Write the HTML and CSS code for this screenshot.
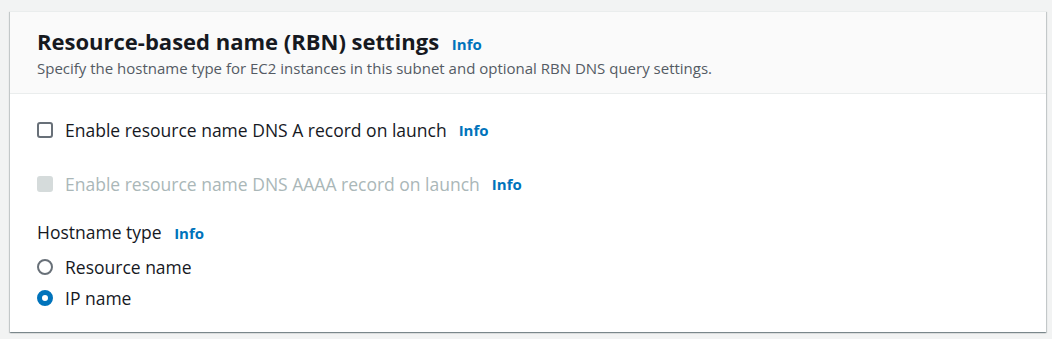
FILE: index.html
```html
<!DOCTYPE html>
<html lang="en">
<head>
    <meta charset="UTF-8">
    <title>Resource-based name (RBN) settings</title>
    <link rel="stylesheet" href="styles.css">
</head>
<body>
    <div class="panel">
        <div class="panel-header">
            <h2 class="panel-title">Resource-based name (RBN) settings <a class="info" href="#">Info</a></h2>
            <p class="panel-desc">Specify the hostname type for EC2 instances in this subnet and optional RBN DNS query settings.</p>
        </div>
        <div class="panel-body">
            <label class="check-row">
                <span class="checkbox"></span>
                <span class="check-label">Enable resource name DNS A record on launch</span>
                <a class="info" href="#">Info</a>
            </label>
            <label class="check-row disabled">
                <span class="checkbox"></span>
                <span class="check-label">Enable resource name DNS AAAA record on launch</span>
                <a class="info" href="#">Info</a>
            </label>
            <div class="field">
                <div class="field-label">Hostname type <a class="info" href="#">Info</a></div>
                <div class="radio-group">
                    <label class="radio-row">
                        <span class="radio"></span>
                        <span>Resource name</span>
                    </label>
                    <label class="radio-row">
                        <span class="radio checked"></span>
                        <span>IP name</span>
                    </label>
                </div>
            </div>
        </div>
    </div>
</body>
</html>
```

FILE: styles.css
```css
* {
    box-sizing: border-box;
}
body {
    margin: 0;
    padding: 11px 6px 6px 10px;
    background-color: #f2f3f3;
    font-family: "Open Sans", "Noto Sans", sans-serif;
    color: #16191f;
}
.panel {
    background-color: white;
    border-top: 1px solid #eaeded;
    box-shadow: 0 1px 1px 0 rgba(0,28,36,0.3), 1px 1px 1px 0 rgba(0,28,36,0.15), -1px 1px 1px 0 rgba(0,28,36,0.15);
}
.panel-header {
    background-color: #fafafa;
    border-bottom: 1px solid #eaeded;
    padding: 15px 26px 15px 27px;
}
.panel-title {
    margin: 0;
    font-size: 22px;
    font-weight: 700;
    line-height: 28px;
}
.info {
    font-size: 15px;
    font-weight: 700;
    color: #0073bb;
    text-decoration: none;
}
.panel-title .info {
    margin-left: 7px;
}
.panel-desc {
    margin: 0;
    font-size: 15px;
    line-height: 20px;
    color: #545b64;
}
.panel-body {
    padding: 24px 27px 22px;
}
.check-row {
    display: flex;
    align-items: center;
    gap: 12px;
    height: 24px;
    font-size: 17.5px;
    margin-bottom: 30px;
}
.check-row .info {
    margin-left: 0;
}
.checkbox {
    width: 16px;
    height: 16px;
    border: 2px solid #687078;
    border-radius: 3px;
    background-color: white;
}
.check-row.disabled {
    color: #aab7b8;
}
.check-row.disabled .checkbox {
    border-color: #d5dbdb;
    background-color: #d5dbdb;
}
.field-label {
    font-size: 17.5px;
    line-height: 24px;
    margin-top: -6px;
    margin-bottom: 10px;
}
.field-label .info {
    margin-left: 8px;
}
.radio-group {
    display: flex;
    flex-direction: column;
    gap: 7px;
}
.radio-row {
    display: flex;
    align-items: center;
    gap: 12px;
    font-size: 17.5px;
    line-height: 24px;
}
.radio {
    width: 16px;
    height: 16px;
    border: 2px solid #687078;
    border-radius: 50%;
    background-color: white;
}
.radio.checked {
    border: 5px solid #0073bb;
}
```
